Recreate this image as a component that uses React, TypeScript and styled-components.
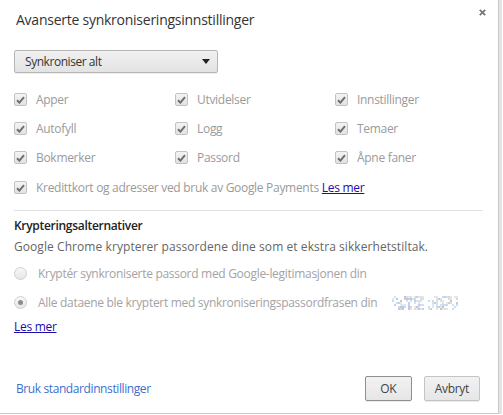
import styled, { createGlobalStyle } from "styled-components";

const GlobalStyle = createGlobalStyle`
  html, body {
    margin: 0;
    padding: 0;
    background: #ffffff;
  }
  body {
    font-family: "Open Sans", "Noto Sans", "DejaVu Sans", sans-serif;
    font-size: 12px;
    letter-spacing: -0.3px;
    color: #333;
  }
`;

const Dialog = styled.div`
  position: relative;
  width: 499px;
  height: 414px;
  background: #fff;
  border-right: 1px solid #c8c8c8;
  border-bottom: 1px solid #c8c8c8;
  box-shadow: 3px 0 0 #e4e4e4;
  display: flex;
  flex-direction: column;
  box-sizing: border-box;
`;

const Close = styled.button`
  position: absolute;
  top: 6px;
  right: 10px;
  width: 12px;
  height: 12px;
  padding: 0;
  border: 0;
  background: transparent;
  display: flex;
  align-items: center;
  justify-content: center;
  cursor: pointer;
`;

const Title = styled.h1`
  margin: 0;
  padding: 10px 16px 0;
  font-size: 14px;
  font-weight: 400;
  letter-spacing: -0.25px;
  color: #333;
  line-height: 20px;
`;

const Body = styled.div`
  padding: 0 14px;
  display: flex;
  flex-direction: column;
  flex: 1;
`;

const Select = styled.div`
  margin-top: 20px;
  width: 204px;
  height: 23px;
  box-sizing: border-box;
  border: 1px solid #b5b5b5;
  border-radius: 2px;
  background: linear-gradient(#f1f1f1, #e3e3e3);
  box-shadow: 0 1px 0 rgba(0, 0, 0, 0.06);
  display: flex;
  align-items: center;
  justify-content: space-between;
  padding: 0 6px 0 10px;
  letter-spacing: -0.45px;
  color: #333;
`;

const Arrow = styled.span`
  width: 0;
  height: 0;
  border-left: 4px solid transparent;
  border-right: 4px solid transparent;
  border-top: 5px solid #222;
  margin-right: 1px;
`;

const Grid = styled.div`
  margin-top: 17px;
  display: grid;
  grid-template-columns: 161px 160px 1fr;
  grid-auto-rows: 19px;
  row-gap: 10px;
`;

const Row = styled.label`
  display: flex;
  align-items: center;
  gap: 9px;
  height: 19px;
  color: #9a9a9a;
  white-space: nowrap;
`;

const Wide = styled(Row)`
  grid-column: 1 / -1;
  margin-top: 1px;
`;

const Box = styled.span`
  width: 13px;
  height: 13px;
  box-sizing: border-box;
  border: 1px solid #c2c2c2;
  border-radius: 2px;
  background: linear-gradient(#f4f4f4, #e2e2e2);
  display: flex;
  align-items: center;
  justify-content: center;
  flex: none;
`;

const Link = styled.a`
  color: #1a0dab;
  text-decoration: underline;
  margin-left: 3px;
`;

const Divider = styled.hr`
  margin: 14px 0 0;
  border: 0;
  border-top: 1px solid #e2e2e2;
  width: 469px;
`;

const Heading = styled.h2`
  margin: 6px 0 0;
  font-size: 12px;
  font-weight: 600;
  letter-spacing: -0.3px;
  color: #222;
  line-height: 18px;
`;

const Desc = styled.p`
  margin: 3px 0 0;
  color: #666;
  letter-spacing: 0.07px;
  line-height: 18px;
`;

const Radios = styled.div`
  margin-top: 8px;
  display: flex;
  flex-direction: column;
  gap: 10px;
`;

const Radio = styled.span<{ $on?: boolean }>`
  width: 13px;
  height: 13px;
  box-sizing: border-box;
  border: 1px solid #cfcfcf;
  border-radius: 50%;
  background: linear-gradient(#f8f8f8, #e6e6e6);
  display: flex;
  align-items: center;
  justify-content: center;
  flex: none;
  &::after {
    content: "";
    display: ${(p) => (p.$on ? "block" : "none")};
    width: 5px;
    height: 5px;
    border-radius: 50%;
    background: #8c8c8c;
  }
`;

const RadioRow = styled(Row)`
  gap: 11px;
  color: #a3a3a3;
`;

const BlockLink = styled.a`
  color: #1a0dab;
  text-decoration: underline;
  margin-top: 6px;
  line-height: 18px;
  align-self: flex-start;
`;

const Footer = styled.div`
  margin-top: auto;
  display: flex;
  align-items: center;
  padding: 0 18px 12px 16px;
`;

const FooterLink = styled.a`
  color: #3b6fcf;
  text-decoration: none;
  letter-spacing: -0.4px;
  flex: 1;
`;

const Button = styled.button<{ $primary?: boolean }>`
  font: inherit;
  letter-spacing: -0.3px;
  color: #444;
  height: 25px;
  min-width: 47px;
  padding: 0 10px;
  margin-left: 12px;
  border-radius: 2px;
  border: 1px solid ${(p) => (p.$primary ? "#8f8f8f" : "#c4c4c4")};
  background: linear-gradient(#f2f2f2, #e6e6e6);
  box-shadow: 0 1px 0 rgba(0, 0, 0, 0.08);
`;

function Check() {
  return (
    <Box>
      <svg width="9" height="8" viewBox="0 0 9 8">
        <path d="M1 4.2 L3.4 6.6 L8 1.2" fill="none" stroke="#6f6f6f" strokeWidth="2" />
      </svg>
    </Box>
  );
}

// pixel noise standing in for the blurred e-mail address
let seed = 20211;
const rnd = () => {
  seed = (seed * 1103515245 + 12345) & 0x7fffffff;
  return seed / 0x7fffffff;
};
const palette = ["#c8dcf2", "#eadcc8", "#dbe8f6", "#bcd2ee", "#f1e5d3", "#d6e2f0", "#c4c8d0"];
const noise = Array.from({ length: 33 * 7 }, (_, i) => {
  const x = (i % 33) * 2;
  const y = Math.floor(i / 33) * 2 + 1;
  const on = rnd() < 0.5 && !(x > 30 && x < 36);
  return { x, y, c: on ? palette[Math.floor(rnd() * palette.length)] : "" };
});

function Blur() {
  return (
    <svg width="66" height="16" viewBox="0 0 66 16" style={{ marginLeft: 4 }}>
      {noise.map(({ x, y, c }, i) =>
        c ? <rect key={i} x={x} y={y} width="2" height="2" fill={c} /> : null
      )}
    </svg>
  );
}

const items = [
  "Apper", "Utvidelser", "Innstillinger",
  "Autofyll", "Logg", "Temaer",
  "Bokmerker", "Passord", "Åpne faner",
];

export default function App() {
  return (
    <>
      <GlobalStyle />
      <Dialog>
        <Close aria-label="Lukk">
          <svg width="7" height="7" viewBox="0 0 7 7">
            <path d="M0.8 0.8 L6.2 6.2 M6.2 0.8 L0.8 6.2" stroke="#777" strokeWidth="1.8" />
          </svg>
        </Close>
        <Title>Avanserte synkroniseringsinnstillinger</Title>
        <Body>
          <Select>
            Synkroniser alt
            <Arrow />
          </Select>
          <Grid>
            {items.map((label) => (
              <Row key={label}>
                <Check />
                {label}
              </Row>
            ))}
            <Wide>
              <Check />
              <span>
                Kredittkort og adresser ved bruk av Google Payments
                <Link href="#">Les mer</Link>
              </span>
            </Wide>
          </Grid>
          <Divider />
          <Heading>Krypteringsalternativer</Heading>
          <Desc>Google Chrome krypterer passordene dine som et ekstra sikkerhetstiltak.</Desc>
          <Radios>
            <RadioRow>
              <Radio />
              Kryptér synkroniserte passord med Google-legitimasjonen din
            </RadioRow>
            <RadioRow>
              <Radio $on />
              Alle dataene ble kryptert med synkroniseringspassordfrasen din
              <Blur />
            </RadioRow>
          </Radios>
          <BlockLink href="#">Les mer</BlockLink>
        </Body>
        <Footer>
          <FooterLink href="#">Bruk standardinnstillinger</FooterLink>
          <Button $primary>OK</Button>
          <Button>Avbryt</Button>
        </Footer>
      </Dialog>
    </>
  );
}
